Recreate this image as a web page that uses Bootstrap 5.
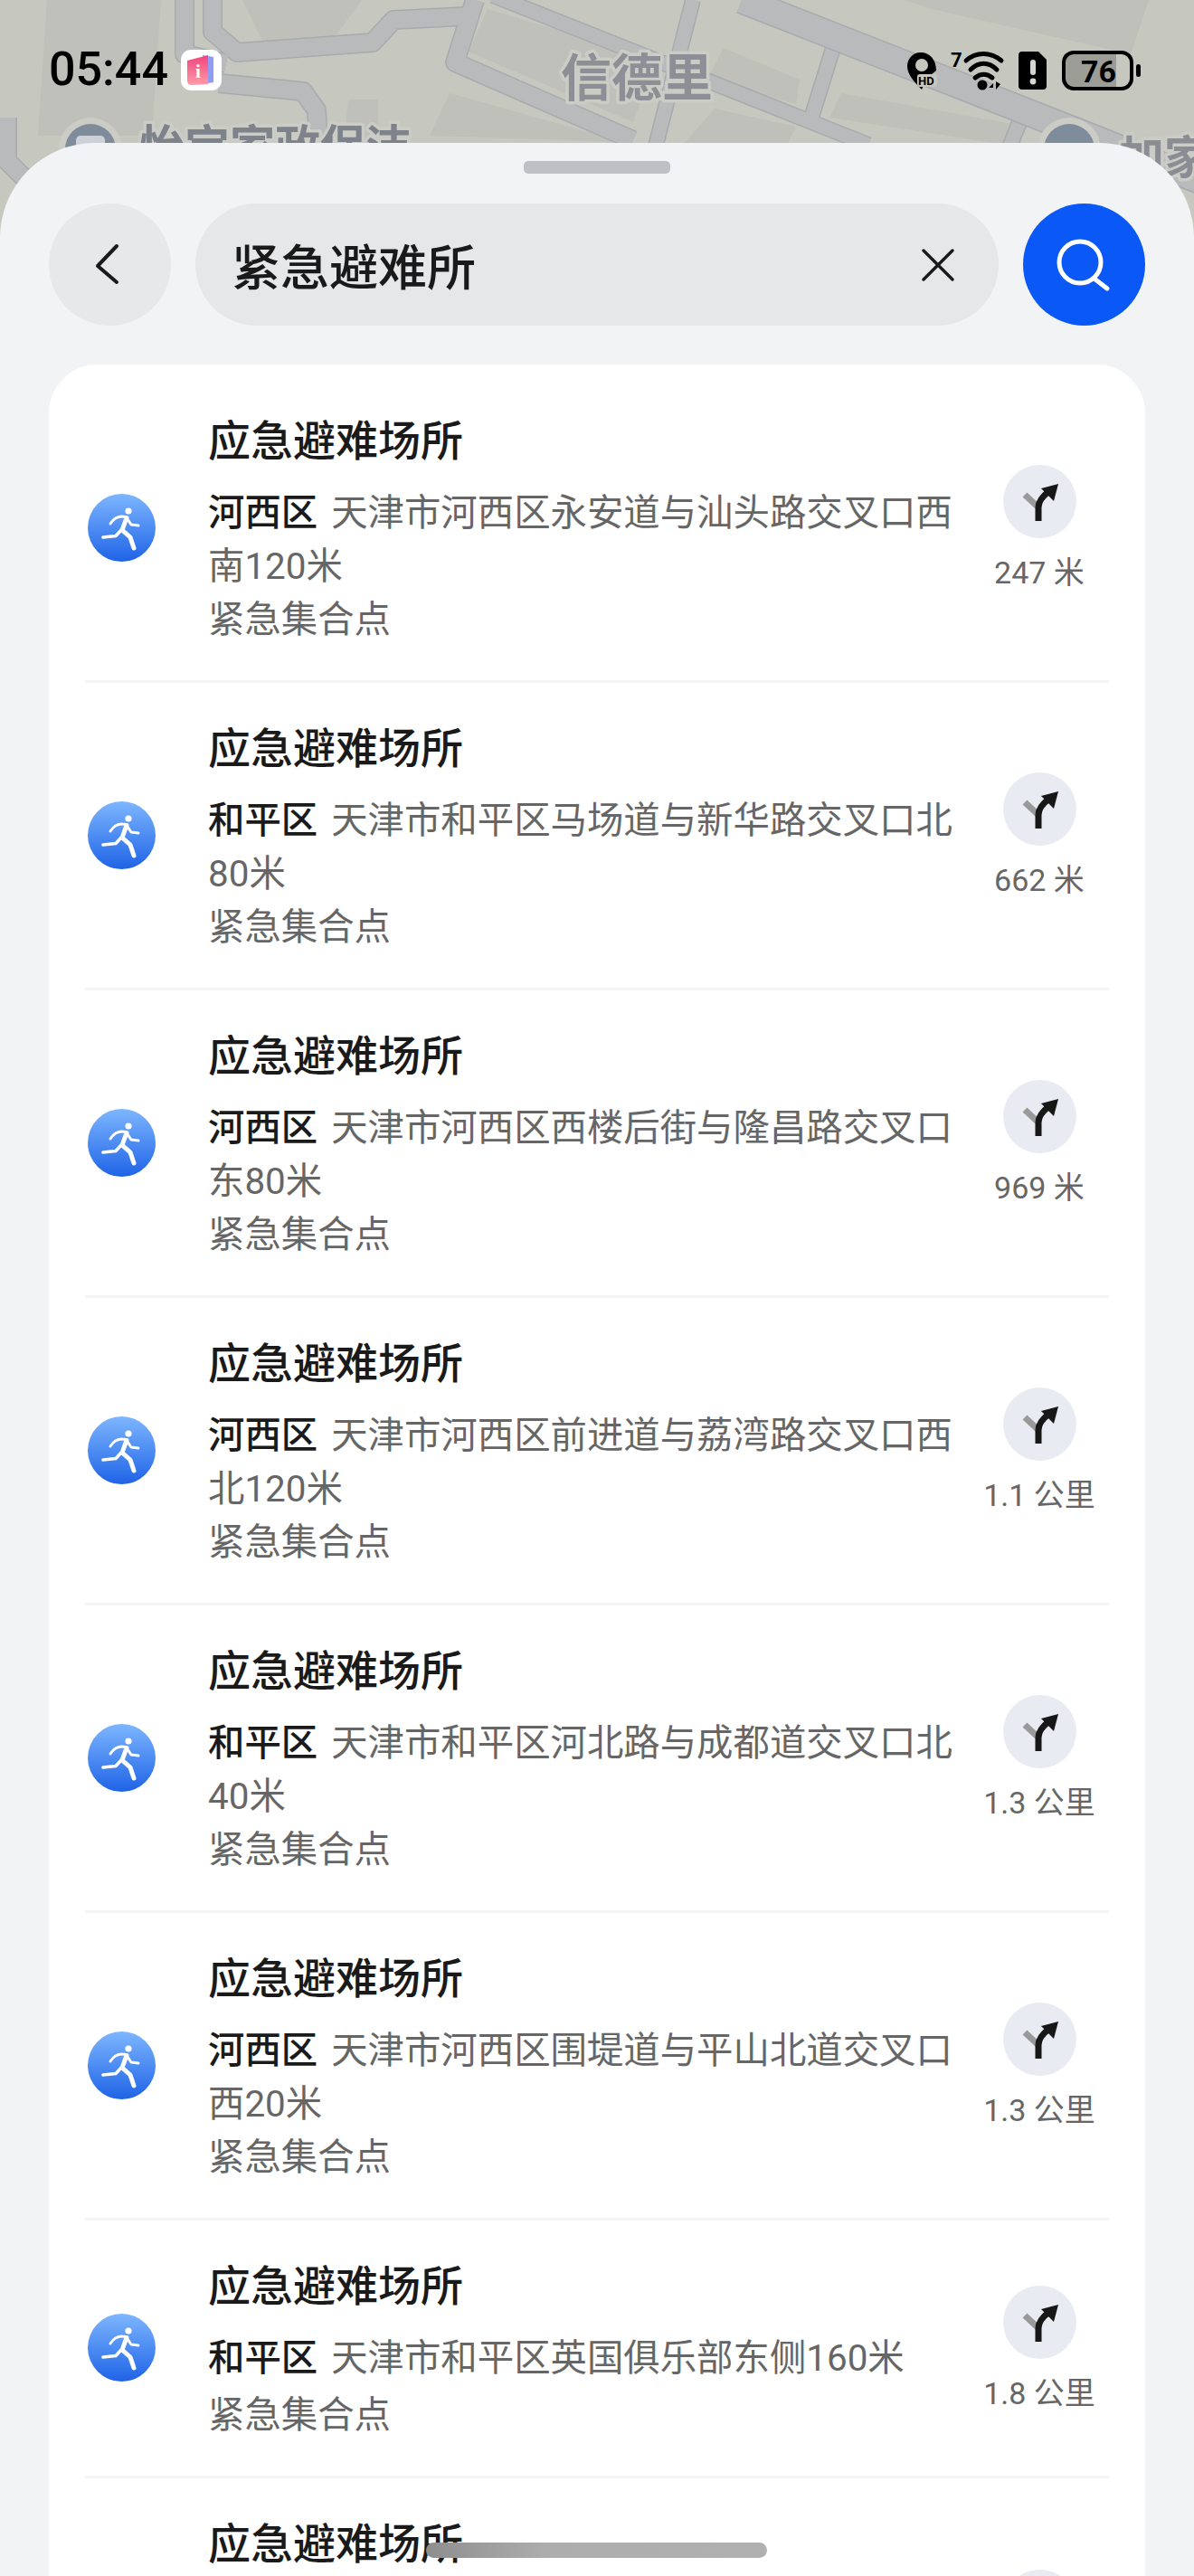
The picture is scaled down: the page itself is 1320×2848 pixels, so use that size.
<!DOCTYPE html>
<html lang="zh-CN">
<head>
  <meta charset="UTF-8" />
  <meta name="viewport" content="width=device-width, initial-scale=1">
  <title>紧急避难所</title>
  <link href="https://cdn.jsdelivr.net/npm/bootstrap@5.3.0/dist/css/bootstrap.min.css" rel="stylesheet">
  <style>
    body {
      font-family: Roboto, "Noto Sans CJK SC", sans-serif;
      background: #c6c8bf;
      color: #1a1a1a;
      margin: 0;
    }

    .phone {
      width: 1320px;
      height: 2848px;
      overflow: hidden;
    }

    .map-layer {
      left: 0;
      top: 0;
    }

    .map-road {
      fill: none;
      stroke: #b8babb;
      stroke-linejoin: round;
    }

    .map-road-edge {
      fill: none;
      stroke: #a8aaae;
      stroke-linejoin: round;
    }

    .map-label {
      font-family: "Noto Sans CJK SC", sans-serif;
      font-weight: 700;
      paint-order: stroke;
      stroke: #cbccc5;
      stroke-width: 7px;
      stroke-linejoin: round;
    }

    .status-bar {
      height: 158px;
      padding: 0 58px 4px 54px;
    }

    .status-time {
      font-size: 52px;
      font-weight: 500;
      line-height: 1;
      color: #000;
    }

    .app-badge {
      width: 45px;
      height: 45px;
      margin-left: 14px;
      border-radius: 11px;
      background: #fff;
    }

    .battery-num {
      font-family: Roboto, sans-serif;
      font-size: 34px;
      font-weight: 700;
    }

    .sheet {
      background: #f2f3f5;
      border-radius: 105px 105px 0 0;
      padding: 20px 54px 0;
    }

    .sheet-handle {
      width: 162px;
      height: 14px;
      margin: 0 auto 33px;
      border-radius: 5px;
      background: #bfc0c3;
    }

    .search-row {
      gap: 27px;
    }

    .round-btn {
      width: 135px;
      height: 135px;
      flex: none;
      border: 0;
      padding: 0;
    }

    .round-btn.back-btn {
      background: #e7e8ea;
    }

    .round-btn.go-btn {
      background: #0a59f7;
    }

    .search-box {
      height: 135px;
      background: #e6e7e9;
      padding: 0 49px 0 40px;
    }

    .search-text {
      font-family: "Noto Sans CJK SC", sans-serif;
      font-size: 54px;
      font-weight: 500;
      line-height: 1;
    }

    .result-card {
      margin-top: 43px;
      padding: 12px 40px 0;
      background: #fff;
      border: 0;
      border-radius: 54px 54px 0 0;
    }

    .result-row {
      border-bottom: 3px solid #f4f4f5;
      padding: 38px 0 37px 3px;
    }

    .result-row:last-child {
      border-bottom: 0;
      min-height: 340px;
    }

    .run-icon {
      width: 75px;
      height: 75px;
      flex: none;
      margin: 0 58px 2px 0;
    }

    .result-body {
      width: 835px;
      flex: none;
    }

    .result-title {
      font-size: 47px;
      font-weight: 500;
      line-height: 64px;
      margin: 3px 0 18px;
    }

    .result-line {
      font-size: 40.4px;
      line-height: 59px;
      color: #666;
      margin: 0;
    }

    .result-line b {
      font-weight: 500;
      color: #1a1a1a;
      margin-right: 15px;
    }

    .result-side {
      width: 156px;
      margin: 0 -1px 2px auto;
    }

    .dir-icon {
      width: 81px;
      height: 81px;
      display: block;
    }

    .dist-text {
      font-size: 34px;
      line-height: 38px;
      margin-top: 19px;
      color: #666;
      white-space: nowrap;
    }

    .gesture-bar {
      left: 471px;
      top: 2811px;
      width: 377px;
      height: 17px;
      border-radius: 9px;
      background: linear-gradient(to right, #8e8e8e, #adadad 35%, #b0b0b0);
    }
  </style>
</head>
<body>

  <svg width="0" height="0" class="position-absolute">
    <defs>
      <linearGradient id="runBg" x1="0" y1="0" x2="0" y2="1">
        <stop offset="0" stop-color="#7db6ff"/>
        <stop offset="1" stop-color="#1f63e6"/>
      </linearGradient>
      <linearGradient id="bookBg" x1="0" y1="0" x2="0" y2="1">
        <stop offset="0" stop-color="#f0447f"/>
        <stop offset="1" stop-color="#ff9aa8"/>
      </linearGradient>
      <symbol id="runner" viewBox="0 0 75 75">
        <circle cx="37.5" cy="37.5" r="37.5" fill="url(#runBg)"/>
        <circle cx="45" cy="19" r="3.6" fill="#fff"/>
        <path d="M43 26.5 L38 40 L47 48 L51 60" fill="none" stroke="#fff" stroke-width="5" stroke-linecap="round" stroke-linejoin="round"/>
        <path d="M42 25.5 C36 24 30 25 25 33 M44 28 L48 34 L56 35" fill="none" stroke="#fff" stroke-width="3" stroke-linecap="round" stroke-linejoin="round"/>
        <path d="M37 40 L31 46.5 L17 48" fill="none" stroke="#fff" stroke-width="3.6" stroke-linecap="round" stroke-linejoin="round"/>
      </symbol>
      <symbol id="turn" viewBox="0 0 81 81">
        <circle cx="40.5" cy="40.5" r="40.5" fill="#e8ebf2"/>
        <path d="M24 33 L39 47" fill="none" stroke="#999" stroke-width="7"/>
        <path d="M39 62 V47 C39 40 43 35 51 29" fill="none" stroke="#171717" stroke-width="7"/>
        <path d="M61 21 L42 26 L56 40 Z" fill="#171717"/>
      </symbol>
      <g id="roadsWide">
        <path d="M204 0 V60 L250 70"/>
        <path d="M235 0 V35 L262 58 L412 47 L435 22 L515 18"/>
        <path d="M242 92 L335 101 L350 122 L352 165"/>
        <path d="M525 0 L503 69 L700 155"/>
        <path d="M8 130 V178 L35 205"/>
      </g>
      <g id="roadsThin">
        <path d="M545 -5 L960 160"/>
        <path d="M766 0 L724 165"/>
        <path d="M922 50 L897 130"/>
        <path d="M1128 133 L1115 165"/>
      </g>
    </defs>
  </svg>

  <div class="phone position-relative">

    <!-- map behind the sheet -->
    <svg class="map-layer position-absolute" width="1320" height="300" viewBox="0 0 1320 300">
      <rect width="1320" height="300" fill="#c6c8bf"/>
      <g fill="#bfc0b9">
        <path d="M52 0 H178 L168 150 H42 Z"/>
        <path d="M268 0 H400 L372 38 L330 52 L290 45 Z"/>
        <path d="M539 10 L518 57 L700 135 L725 65 Z"/>
        <path d="M800 53 L884 88 L880 115 L782 88 Z"/>
        <path d="M930 103 L1120 137 L1112 160 L917 130 Z"/>
        <path d="M497 103 L690 157 L475 150 Z"/>
        <path d="M1000 0 H1270 L1250 60 L1030 10 Z"/>
        <path d="M385 110 H418 V160 H380 Z"/>
        <path d="M790 120 L880 140 L870 160 L755 160 Z"/>
      </g>
      <use href="#roadsThin" class="map-road-edge" stroke-width="18"/>
      <use href="#roadsThin" class="map-road" stroke-width="15"/>
      <use href="#roadsWide" class="map-road-edge" stroke-width="22"/>
      <use href="#roadsWide" class="map-road" stroke-width="19"/>
      <path class="map-road-edge" stroke-width="31" d="M820 0 L1195 147 L1340 205"/>
      <path class="map-road" stroke-width="28" d="M820 0 L1195 147 L1340 205"/>

      <text class="map-label" x="620" y="106" font-size="56" fill="#8e8f96">信德里</text>

      <circle cx="100" cy="165" r="35" fill="#cbccc5"/>
      <circle cx="100" cy="165" r="28" fill="#7f8c9c"/>
      <rect x="84" y="150" width="32" height="20" rx="5" fill="#cdd2d8"/>
      <text class="map-label" x="154" y="180" font-size="50" fill="#7e828a">怡宝家政保洁</text>

      <circle cx="1182" cy="165" r="35" fill="#cbccc5"/>
      <circle cx="1182" cy="165" r="28" fill="#7f8c9c"/>
      <text class="map-label" x="1237" y="192" font-size="50" fill="#8a8d93">加家</text>
    </svg>

    <div class="status-bar position-relative d-flex align-items-center justify-content-between">
      <div class="d-flex align-items-center">
        <span class="status-time">05:44</span>
        <svg class="app-badge" viewBox="0 0 45 45">
          <path d="M24 6 L36 8 V36 L24 38 Z" fill="#8f9cf5"/>
          <path d="M7 12 L30 6 V38 L12 39 Q7 39 7 34 Z" fill="url(#bookBg)"/>
          <text x="16" y="31" font-size="21" font-family="Liberation Serif, serif" font-weight="700" fill="#fff">i</text>
        </svg>
      </div>
      <svg width="263" height="46" viewBox="0 0 263 46">
        <!-- location pin -->
        <path d="M19 4 C9 4 4 12 4 19 C4 29 13 38 20 45 L26 32 L36 24 C36 12 29 4 19 4 Z" fill="#000"/>
        <circle cx="20" cy="18" r="7" fill="#c6c8bf"/>
        <rect x="15" y="28" width="22" height="14" rx="3" fill="#c6c8bf"/>
        <text x="16" y="40" font-size="13" font-weight="700" font-family="Roboto, sans-serif" fill="#000">HD</text>
        <!-- wifi 7 -->
        <text x="52" y="20" font-size="22" font-weight="700" font-family="Roboto, sans-serif" fill="#000">7</text>
        <g fill="none" stroke="#000" stroke-width="5" stroke-linecap="round">
          <path d="M69 13 C80 3 96 3 108 13"/>
          <path d="M74 23 C83 14 94 14 103 23"/>
          <path d="M79 32 C85 27 92 27 98 32"/>
        </g>
        <circle cx="87" cy="40" r="5.5" fill="#000"/>
        <path d="M99 38 L94 43 H99 Z M102 36 V45 L107 39 Z" fill="#000"/>
        <!-- sim with alert -->
        <path d="M127 7 Q127 3 131 3 H149 L158 12 V41 Q158 45 154 45 H131 Q127 45 127 41 Z" fill="#000"/>
        <rect x="140" y="12" width="6" height="17" rx="3" fill="#d6d7d0"/>
        <circle cx="143" cy="36" r="3.4" fill="#d6d7d0"/>
        <!-- battery -->
        <path d="M180 5 H235 V42 H180 Q177 42 177 39 V8 Q177 5 180 5 Z" fill="#9c9d97"/>
        <rect x="177" y="4" width="75" height="40" rx="11" fill="none" stroke="#000" stroke-width="4"/>
        <text class="battery-num" x="196" y="37" fill="#000">76</text>
        <rect x="257" y="17" width="5" height="14" rx="2.5" fill="#000"/>
      </svg>
    </div>

    <div class="sheet position-relative">
      <div class="sheet-handle"></div>

      <div class="search-row d-flex align-items-center">
        <button type="button" class="round-btn back-btn rounded-circle d-flex align-items-center justify-content-center">
          <svg width="135" height="135" viewBox="0 0 135 135"><path d="M75 47 L54 69 L75 87" fill="none" stroke="#1a1a1a" stroke-width="4" stroke-linecap="round" stroke-linejoin="round"/></svg>
        </button>
        <div class="search-box rounded-pill d-flex align-items-center justify-content-between flex-grow-1">
          <span class="search-text">紧急避难所</span>
          <svg width="36" height="36" viewBox="0 0 36 36"><path d="M2 2 L34 34 M34 2 L2 34" stroke="#1a1a1a" stroke-width="3.4" stroke-linecap="round"/></svg>
        </div>
        <button type="button" class="round-btn go-btn rounded-circle d-flex align-items-center justify-content-center">
          <svg width="135" height="135" viewBox="0 0 135 135"><circle cx="63" cy="65" r="23" fill="none" stroke="#fff" stroke-width="5"/><path d="M80 84 L93 94" stroke="#fff" stroke-width="5" stroke-linecap="round"/></svg>
        </button>
      </div>

      <div class="card result-card">
        <div class="result-row d-flex align-items-center">
          <svg class="run-icon"><use href="#runner"/></svg>
          <div class="result-body">
            <div class="result-title">应急避难场所</div>
            <p class="result-line"><b>河西区</b>天津市河西区永安道与汕头路交叉口西南120米</p>
            <p class="result-line">紧急集合点</p>
          </div>
          <div class="result-side d-flex flex-column align-items-center">
            <svg class="dir-icon"><use href="#turn"/></svg>
            <span class="dist-text">247 米</span>
          </div>
        </div>

        <div class="result-row d-flex align-items-center">
          <svg class="run-icon"><use href="#runner"/></svg>
          <div class="result-body">
            <div class="result-title">应急避难场所</div>
            <p class="result-line"><b>和平区</b>天津市和平区马场道与新华路交叉口北80米</p>
            <p class="result-line">紧急集合点</p>
          </div>
          <div class="result-side d-flex flex-column align-items-center">
            <svg class="dir-icon"><use href="#turn"/></svg>
            <span class="dist-text">662 米</span>
          </div>
        </div>

        <div class="result-row d-flex align-items-center">
          <svg class="run-icon"><use href="#runner"/></svg>
          <div class="result-body">
            <div class="result-title">应急避难场所</div>
            <p class="result-line"><b>河西区</b>天津市河西区西楼后街与隆昌路交叉口东80米</p>
            <p class="result-line">紧急集合点</p>
          </div>
          <div class="result-side d-flex flex-column align-items-center">
            <svg class="dir-icon"><use href="#turn"/></svg>
            <span class="dist-text">969 米</span>
          </div>
        </div>

        <div class="result-row d-flex align-items-center">
          <svg class="run-icon"><use href="#runner"/></svg>
          <div class="result-body">
            <div class="result-title">应急避难场所</div>
            <p class="result-line"><b>河西区</b>天津市河西区前进道与荔湾路交叉口西北120米</p>
            <p class="result-line">紧急集合点</p>
          </div>
          <div class="result-side d-flex flex-column align-items-center">
            <svg class="dir-icon"><use href="#turn"/></svg>
            <span class="dist-text">1.1 公里</span>
          </div>
        </div>

        <div class="result-row d-flex align-items-center">
          <svg class="run-icon"><use href="#runner"/></svg>
          <div class="result-body">
            <div class="result-title">应急避难场所</div>
            <p class="result-line"><b>和平区</b>天津市和平区河北路与成都道交叉口北40米</p>
            <p class="result-line">紧急集合点</p>
          </div>
          <div class="result-side d-flex flex-column align-items-center">
            <svg class="dir-icon"><use href="#turn"/></svg>
            <span class="dist-text">1.3 公里</span>
          </div>
        </div>

        <div class="result-row d-flex align-items-center">
          <svg class="run-icon"><use href="#runner"/></svg>
          <div class="result-body">
            <div class="result-title">应急避难场所</div>
            <p class="result-line"><b>河西区</b>天津市河西区围堤道与平山北道交叉口西20米</p>
            <p class="result-line">紧急集合点</p>
          </div>
          <div class="result-side d-flex flex-column align-items-center">
            <svg class="dir-icon"><use href="#turn"/></svg>
            <span class="dist-text">1.3 公里</span>
          </div>
        </div>

        <div class="result-row d-flex align-items-center">
          <svg class="run-icon"><use href="#runner"/></svg>
          <div class="result-body">
            <div class="result-title">应急避难场所</div>
            <p class="result-line mb-1"><b>和平区</b>天津市和平区英国俱乐部东侧160米</p>
            <p class="result-line">紧急集合点</p>
          </div>
          <div class="result-side d-flex flex-column align-items-center">
            <svg class="dir-icon"><use href="#turn"/></svg>
            <span class="dist-text">1.8 公里</span>
          </div>
        </div>

        <!-- cut off by the bottom of the screen -->
        <div class="result-row d-flex align-items-center">
          <svg class="run-icon"><use href="#runner"/></svg>
          <div class="result-body align-self-start">
            <div class="result-title">应急避难场所</div>
          </div>
          <div class="result-side d-flex flex-column align-items-center">
            <svg class="dir-icon"><use href="#turn"/></svg>
            <span class="dist-text">&nbsp;</span>
          </div>
        </div>
      </div>
    </div>

    <div class="gesture-bar position-absolute"></div>
  </div>

  <script src="https://cdn.jsdelivr.net/npm/bootstrap@5.3.0/dist/js/bootstrap.bundle.min.js"></script>
</body>
</html>
